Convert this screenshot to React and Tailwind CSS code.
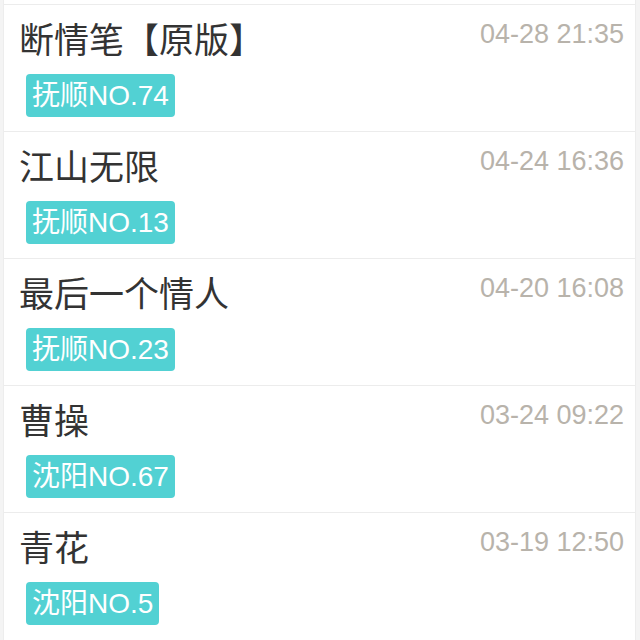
const rows = [
  { title: "断情笔【原版】", tag: "抚顺NO.74", time: "04-28 21:35" },
  { title: "江山无限", tag: "抚顺NO.13", time: "04-24 16:36" },
  { title: "最后一个情人", tag: "抚顺NO.23", time: "04-20 16:08" },
  { title: "曹操", tag: "沈阳NO.67", time: "03-24 09:22" },
  { title: "青花", tag: "沈阳NO.5", time: "03-19 12:50" },
];

const Row = ({ title, tag, time }) => (
  <div className="h-[127px] border-t border-[#ececec] bg-white pl-[15px] pr-[11px] pt-[12px] flex justify-between">
    <div className="flex flex-col items-start">
      <div
        className="text-[35px] leading-[42px] text-[#333333]"
        style={{ fontFamily: '"Noto Sans CJK SC", sans-serif' }}
      >
        {title}
      </div>
      <div
        className="mt-[15px] ml-[7px] h-[43px] px-[6px] rounded-[4px] bg-[#52d1d3] text-white text-[28px] leading-[43px]"
        style={{ fontFamily: '"Liberation Sans", "Noto Sans CJK SC", sans-serif' }}
      >
        {tag}
      </div>
    </div>
    <div
      className="pt-[2px] text-[27px] leading-[30px] text-[#b8b3ab]"
      style={{ fontFamily: '"Liberation Sans", sans-serif' }}
    >
      {time}
    </div>
  </div>
);

export default function App() {
  return (
    <div className="w-[640px] h-[640px] overflow-hidden bg-[#f4f4f4]">
      <div className="ml-[3px] mr-[4px] border-x border-[#ededed] bg-white h-full">
        <div className="h-[4px] bg-white" />
        {rows.map((r) => (
          <Row key={r.title} {...r} />
        ))}
      </div>
    </div>
  );
}
